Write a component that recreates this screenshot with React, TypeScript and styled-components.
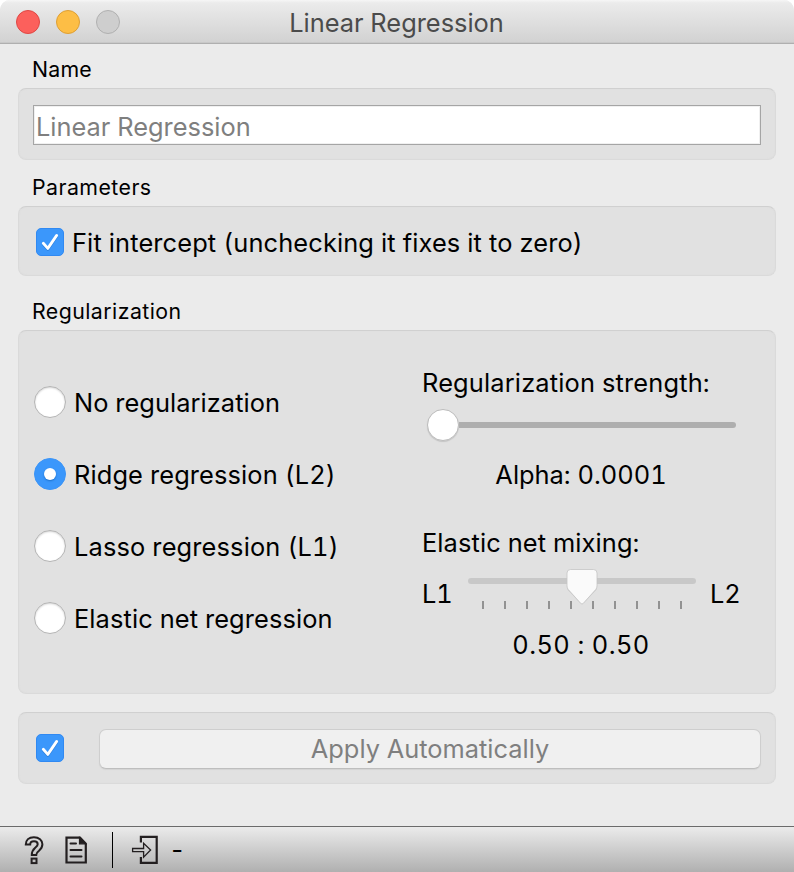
import React from "react";
import styled, { createGlobalStyle } from "styled-components";

const GlobalStyle = createGlobalStyle`
  * { box-sizing: border-box; }
  body { margin: 0; background: #fff; }
`;

const Window = styled.div`
  width: 794px;
  height: 872px;
  display: flex;
  flex-direction: column;
  background: #ebebeb;
  border-radius: 10px 10px 0 0;
  overflow: hidden;
  font-family: Inter, "Liberation Sans", sans-serif;
  font-feature-settings: "calt" 0, "tnum" 1;
  color: #000;
`;

const TitleBar = styled.header`
  flex: none;
  height: 44px;
  display: grid;
  grid-template-columns: 1fr auto 1fr;
  align-items: center;
  padding: 0 17px 0 16px;
  background: linear-gradient(#f6f6f6 0, #ebebeb 3px, #d2d2d2 42px);
  border-bottom: 1px solid #afafaf;
  box-shadow: inset 0 -1px #c8c8c8;
`;

const Lights = styled.div`
  display: flex;
  gap: 16px;
`;

const Light = styled.span<{ $fill: string; $edge: string }>`
  width: 24px;
  height: 24px;
  border-radius: 50%;
  background: ${(p) => p.$fill};
  border: 1px solid ${(p) => p.$edge};
`;

const Text = styled.span<{ $track?: number; $muted?: boolean; $small?: boolean }>`
  display: block;
  font-size: ${(p) => (p.$small ? 21.3 : 25.4)}px;
  line-height: 32px;
  letter-spacing: ${(p) => p.$track ?? 0}px;
  color: ${(p) => (p.$muted ? "#7f7f7f" : "#000")};
  white-space: nowrap;
`;

const Title = styled(Text)`
  color: #4b4b4b;
  padding-top: 2px;
`;

const Content = styled.main`
  flex: 1;
  padding: 0 18px;
`;

const SectionTitle = styled.div<{ $height: number; $top: number }>`
  height: ${(p) => p.$height}px;
  padding: ${(p) => p.$top}px 0 0 14px;
`;

const Group = styled.section<{ $height: number }>`
  height: ${(p) => p.$height}px;
  border-radius: 8px;
  background: #e1e1e1;
  border: 1px solid #dadada;
  border-top-color: #d0d0d0;
  box-shadow: inset 0 0 2px #dcdcdc;
`;

const NameGroup = styled(Group)`
  padding: 16px 14px;
`;

const NameField = styled.div`
  height: 40px;
  background: #fff;
  border: 1px solid #a5a5a5;
  box-shadow: inset 0 0 0 1px #f0f0f0;
  padding: 5px 2px;
`;

const CheckGroup = styled(Group)`
  display: flex;
  align-items: center;
  padding: 2px 17px 0;
  gap: 8px;
  ${Text} { padding-top: 2px; }
`;

const ApplyGroup = styled(Group)`
  display: flex;
  align-items: center;
  padding: 0 14px 0 17px;
  gap: 35px;
`;

const CheckBox = styled.span`
  flex: none;
  width: 28px;
  height: 28px;
  border-radius: 5px;
  background: #3b97fb;
  border: 1px solid #3089f2;
  svg { display: block; margin: -1px; }
`;

const ApplyButton = styled.div`
  flex: 1;
  height: 40px;
  margin-top: 2px;
  display: flex;
  align-items: center;
  justify-content: center;
  border-radius: 7px;
  background: #f0f0f0;
  border: 1px solid #cecece;
  border-bottom-color: #bebebe;
  box-shadow: 0 1px 1px #d4d4d4;
`;

const RegGroup = styled(Group)`
  display: grid;
  grid-template-columns: 388px 318px;
  padding: 0 15px;
`;

const Radios = styled.div`
  display: flex;
  flex-direction: column;
  gap: 40px;
  padding-top: 55px;
`;

const RadioRow = styled.div`
  display: flex;
  align-items: center;
  height: 32px;
  gap: 8px;
  ${Text} { padding-top: 1px; }
`;

const RadioDot = styled.span<{ $on?: boolean }>`
  width: 32px;
  height: 32px;
  display: grid;
  place-items: center;
  border-radius: 50%;
  background: ${(p) => (p.$on ? "#3b97fb" : "#fff")};
  border: 1px solid ${(p) => (p.$on ? "#3b94f7" : "#b4b4b4")};
  box-shadow: ${(p) => (p.$on ? "none" : "inset 0 1px 2px #d4d4d4")};
  &::after {
    content: "";
    width: 12px;
    height: 12px;
    border-radius: 50%;
    background: #fff;
    box-shadow: ${(p) => (p.$on ? "0 1px 2px #1c6fc8" : "none")};
  }
`;

const Controls = styled.div`
  display: flex;
  flex-direction: column;
  padding-top: 36px;
`;

const StrengthSlider = styled.div`
  height: 32px;
  margin: 10px 0 18px 5px;
  display: flex;
  align-items: center;
`;

const RoundKnob = styled.span`
  width: 32px;
  height: 32px;
  border-radius: 50%;
  background: #fff;
  border: 1px solid #bcbcbc;
  box-shadow: 0 1px 1px #c4c4c4;
`;

const StrengthTrack = styled.span`
  width: 277px;
  height: 6px;
  border-radius: 0 3px 3px 0;
  background: #aeaeae;
`;

const Centered = styled.div<{ $bottom?: number }>`
  display: flex;
  justify-content: center;
  margin-bottom: ${(p) => p.$bottom ?? 0}px;
`;

const MixRow = styled.div`
  height: 44px;
  margin: 8px 0 18px;
  display: grid;
  grid-template-columns: 46px 228px auto;
  ${Text} { padding-top: 11px; }
  svg { display: block; }
`;

const MixEnd = styled(Text)`
  margin-left: 14px;
`;

const StatusBar = styled.footer`
  flex: none;
  height: 46px;
  display: flex;
  align-items: flex-start;
  border-top: 1px solid #6b6b6b;
  background: linear-gradient(#ebebeb, #b0b0b0);
  svg { display: block; }
`;

const Divider = styled.span`
  width: 1px;
  height: 36px;
  margin: 5px 18px 0 24px;
  background: #000;
`;

const StatusText = styled(Text)`
  margin: 7px 0 0 10px;
`;

const Tick = () => (
  <CheckBox>
    <svg width="28" height="28" viewBox="0 0 28 28" fill="none" strokeLinecap="round" strokeLinejoin="round" strokeWidth="2.8">
      <path d="M7.3 16.3 11.8 21.4 20.7 8.4" stroke="#2a7fdc" />
      <path d="M7.3 15.3 11.8 20.4 20.7 7.4" stroke="#fff" />
    </svg>
  </CheckBox>
);

const MixSlider = () => (
  <svg width="228" height="44" viewBox="468 567 228 44">
    <rect x="468" y="578" width="228" height="6" rx="3" fill="#c8c8c8" />
    {Array.from({ length: 10 }, (_, i) => (
      <rect key={i} x={482 + i * 22} y="601" width="2" height="8" fill="#929292" />
    ))}
    <path d="M570.5 570.5h23q3.5 0 3.5 3.5v13q0 2-1.3 3.6L583.4 603.6q-1.4 1.3-2.8 0L568.3 590.6q-1.3-1.6-1.3-3.6v-13q0-3.5 3.5-3.5Z" fill="#b0b0b0" opacity=".45" />
    <path d="M570.5 569.5h23q3.5 0 3.5 3.5v13q0 2-1.3 3.6L583.2 603.4q-1.2 1.2-2.4 0L568.3 589.6q-1.3-1.6-1.3-3.6v-13q0-3.5 3.5-3.5Z" fill="#fafafa" stroke="#c4c4c4" strokeWidth=".8" />
  </svg>
);

const StatusIcons = () => (
  <svg width="88" height="45" viewBox="0 827 88 45" fill="none" stroke="#231f20">
    <path d="M25.8 844.6c0-4.4 3-7.4 8.1-7.4 5 0 8.5 2.9 8.5 7.1 0 3-1.4 4.8-3.4 6.4-2.1 1.6-2.8 2.6-2.8 4.2h-4.4c0-3.3 1.1-5.2 3.2-7 1.6-1.3 2.7-2 2.7-3.6 0-1.9-1.3-3.1-3.7-3.1-2.5 0-3.8 1.3-3.8 3.4Z" strokeWidth="2" />
    <rect x="31.6" y="858.6" width="4.9" height="4.5" strokeWidth="2" />
    <path d="M66.5 837.7H80l5.8 6v18.8H66.5Z" strokeWidth="2.2" />
    <path d="M79.5 837.5v6.3h6.2Z" fill="#231f20" strokeWidth="1.2" />
    <path d="M70.5 843.5h5.5M70.5 850h11M70.5 856.4h11" strokeWidth="2" strokeLinecap="round" />
  </svg>
);

const InputIcon = () => (
  <svg width="28" height="45" viewBox="131 827 28 45" fill="none" stroke="#231f20">
    <path d="M140.9 842.5v-5.6h15.8v26H140.9v-5.8" strokeWidth="2.2" />
    <path d="M132.6 848.5h11v-5.3l7 6.8-7 7.2v-5.6h-11Z" strokeWidth="1.3" />
  </svg>
);

const options = [
  { label: "No regularization", track: 0.05 },
  { label: "Ridge regression (L2)", track: 0.12 },
  { label: "Lasso regression (L1)", track: 0.15 },
  { label: "Elastic net regression", track: 0.1 },
];

const selected = "Ridge regression (L2)";

export default function App() {
  return (
    <>
      <GlobalStyle />
      <Window>
        <TitleBar>
          <Lights>
            <Light $fill="#fc605c" $edge="#df4744" />
            <Light $fill="#fdbe45" $edge="#de9f34" />
            <Light $fill="#cecece" $edge="#b0b0b0" />
          </Lights>
          <Title>Linear Regression</Title>
          <span />
        </TitleBar>
        <Content>
          <SectionTitle $height={44} $top={9}><Text $small $track={0.2}>Name</Text></SectionTitle>
          <NameGroup $height={72}>
            <NameField><Text $muted>Linear Regression</Text></NameField>
          </NameGroup>
          <SectionTitle $height={46} $top={11}><Text $small $track={0.45}>Parameters</Text></SectionTitle>
          <CheckGroup $height={70}>
            <Tick />
            <Text $track={0.13}>Fit intercept (unchecking it fixes it to zero)</Text>
          </CheckGroup>
          <SectionTitle $height={54} $top={19}><Text $small $track={0.45}>Regularization</Text></SectionTitle>
          <RegGroup $height={364}>
            <Radios>
              {options.map((o) => (
                <RadioRow key={o.label}>
                  <RadioDot $on={o.label === selected} />
                  <Text $track={o.track}>{o.label}</Text>
                </RadioRow>
              ))}
            </Radios>
            <Controls>
              <Text $track={0.16}>Regularization strength:</Text>
              <StrengthSlider><RoundKnob /><StrengthTrack /></StrengthSlider>
              <Centered $bottom={36}><Text>Alpha: 0.0001</Text></Centered>
              <Text $track={0.1}>Elastic net mixing:</Text>
              <MixRow><Text>L1</Text><MixSlider /><MixEnd>L2</MixEnd></MixRow>
              <Centered><Text $track={0.4}>0.50 : 0.50</Text></Centered>
            </Controls>
          </RegGroup>
          <SectionTitle $height={18} $top={0} />
          <ApplyGroup $height={72}>
            <Tick />
            <ApplyButton><Text $muted>Apply Automatically</Text></ApplyButton>
          </ApplyGroup>
        </Content>
        <StatusBar>
          <StatusIcons />
          <Divider />
          <InputIcon />
          <StatusText>-</StatusText>
        </StatusBar>
      </Window>
    </>
  );
}
